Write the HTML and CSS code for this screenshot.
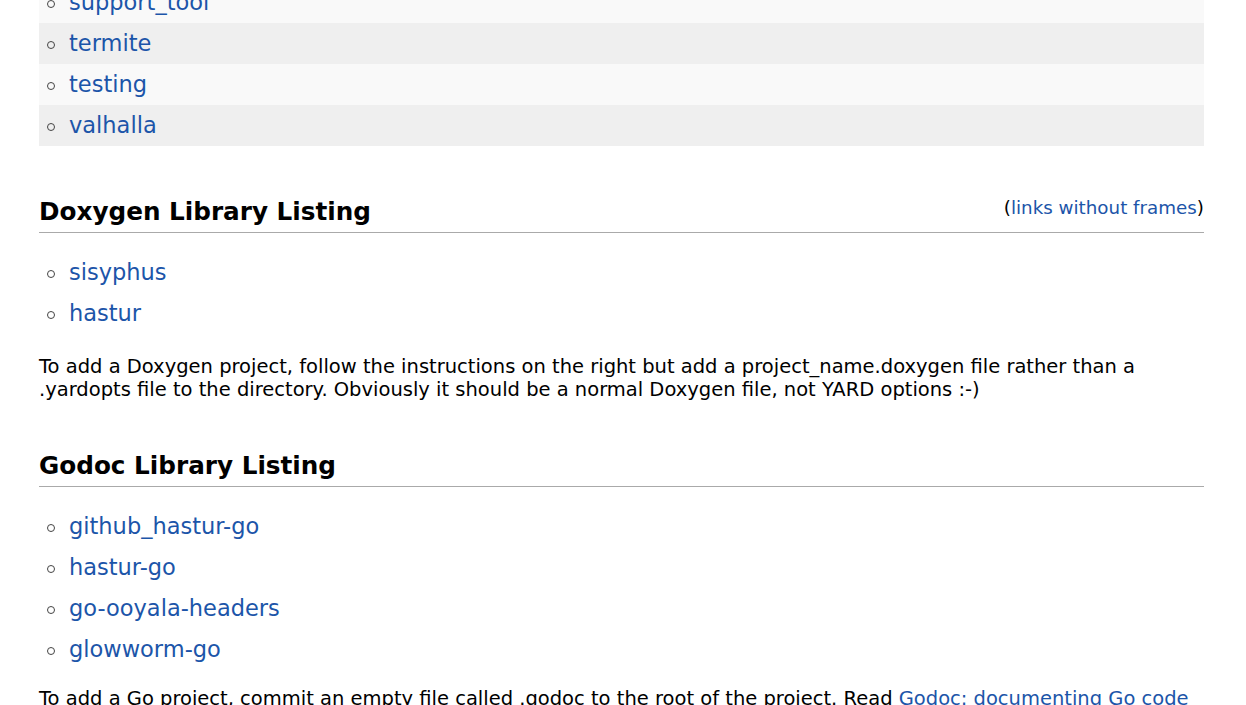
FILE: index.html
```html
<!DOCTYPE html>
<html>
<head>
<meta charset="utf-8">
<title>Library Listing</title>
<link rel="stylesheet" href="styles.css">
</head>
<body>
<div class="page">
  <ul class="libs striped first">
    <li><a href="#">support_tool</a></li>
    <li><a href="#">termite</a></li>
    <li><a href="#">testing</a></li>
    <li><a href="#">valhalla</a></li>
  </ul>

  <h2 class="heading"><span class="aside">(<a href="#">links without frames</a>)</span>Doxygen Library Listing</h2>
  <ul class="libs after-heading">
    <li><a href="#">sisyphus</a></li>
    <li><a href="#">hastur</a></li>
  </ul>
  <p class="note doxy-note">To add a Doxygen project, follow the instructions on the right but add a project_name.doxygen file rather than a .yardopts file to the directory. Obviously it should be a normal Doxygen file, not YARD options :-)</p>

  <h2 class="heading">Godoc Library Listing</h2>
  <ul class="libs after-heading">
    <li><a href="#">github_hastur-go</a></li>
    <li><a href="#">hastur-go</a></li>
    <li><a href="#">go-ooyala-headers</a></li>
    <li><a href="#">glowworm-go</a></li>
  </ul>
  <p class="note go-note">To add a Go project, commit an empty file called .godoc to the root of the project. Read <a href="#">Godoc: documenting Go code</a> for more information.</p>
</div>
</body>
</html>
```

FILE: styles.css
```css
html, body {
  margin: 0;
  padding: 0;
  background: #ffffff;
  overflow: hidden;
}

body {
  font-family: "DejaVu Sans", "Noto Sans", sans-serif;
  color: #000000;
}

.page {
  padding: 0 42px 0 39px;
}

a {
  color: #1c55a9;
  text-decoration: none;
}

.libs {
  list-style: none;
  margin: 0;
  padding: 0;
}

.libs li {
  display: block;
  height: 41px;
  line-height: 41px;
  font-size: 22.5px;
  white-space: nowrap;
}

.libs li::before {
  content: "";
  display: inline-block;
  width: 6px;
  height: 6px;
  border: 1px solid #444444;
  border-radius: 50%;
  vertical-align: middle;
  margin-left: 8px;
  margin-right: 14px;
}

.striped li:nth-child(odd) {
  background: #f9f9f9;
}

.striped li:nth-child(even) {
  background: #efefef;
}

.first {
  margin-top: -18px;
}

.heading {
  margin: 50px 0 0 0;
  padding: 0 0 4px 0;
  font-size: 24.7px;
  line-height: 32px;
  font-weight: bold;
  border-bottom: 1px solid #aaaaaa;
}

.heading + .after-heading {
  margin-top: 19px;
}

.aside {
  float: right;
  font-size: 18.3px;
  line-height: 23px;
  font-weight: normal;
}

.note {
  margin: 21px 0 0 0;
  font-size: 19.5px;
  line-height: 23px;
}

.doxy-note + .heading {
  margin-top: 49px;
}

.go-note {
  margin-top: 17px;
}
```
